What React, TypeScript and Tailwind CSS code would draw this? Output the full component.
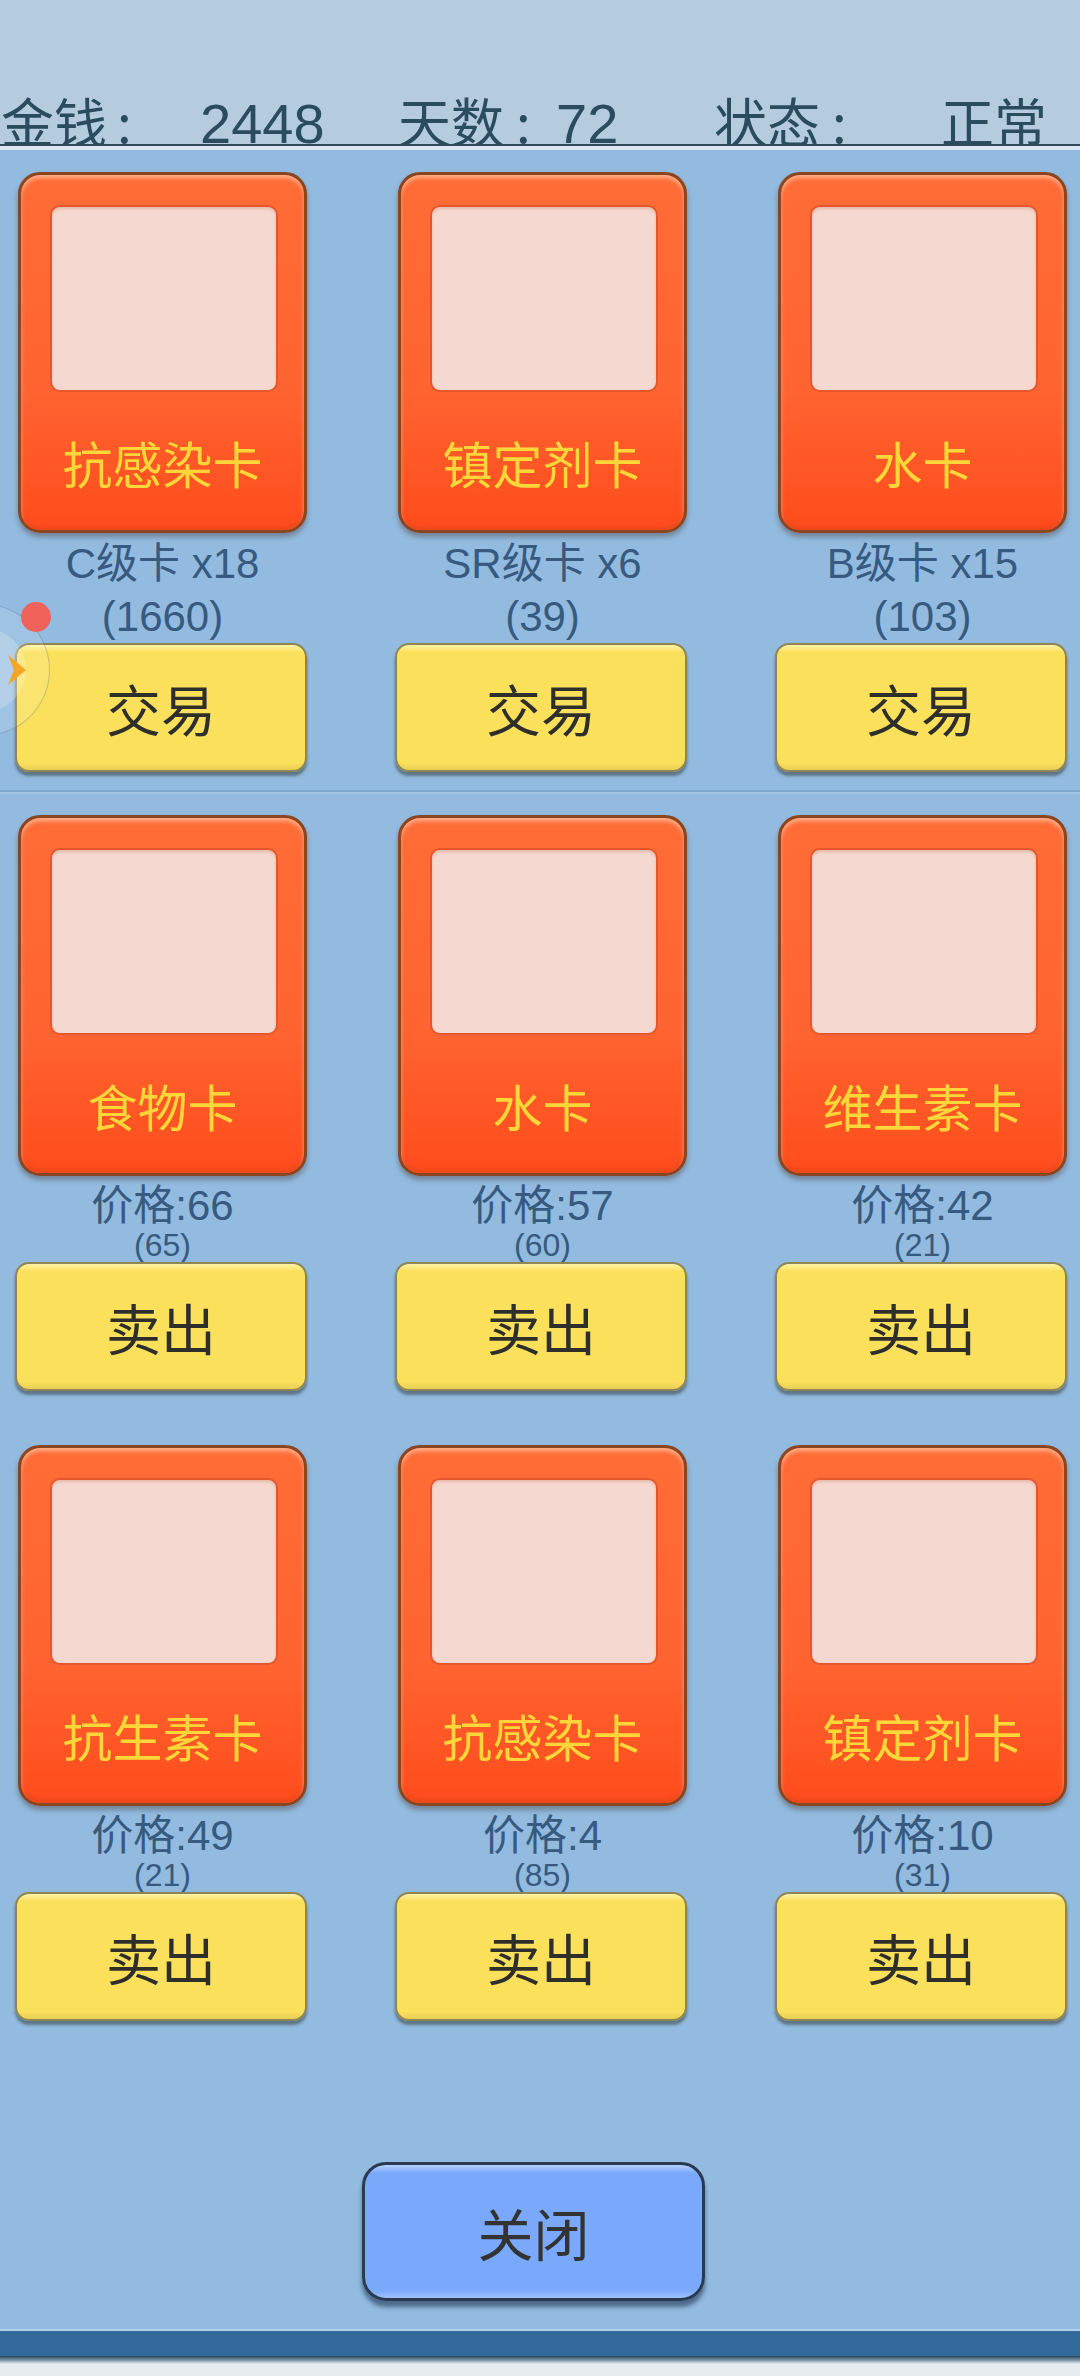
const CN = '"Noto Sans CJK SC", "Noto Sans", sans-serif';
const LS = '"Liberation Sans", "Noto Sans CJK SC", sans-serif';

type TradeCard = { name: string; grade: string; price: number };
type SellCard = { name: string; price: number; base: number };

const TRADE: TradeCard[] = [
  { name: '抗感染卡', grade: 'C级卡 x18', price: 1660 },
  { name: '镇定剂卡', grade: 'SR级卡 x6', price: 39 },
  { name: '水卡', grade: 'B级卡 x15', price: 103 },
];

const SELL_ROWS: SellCard[][] = [
  [
    { name: '食物卡', price: 66, base: 65 },
    { name: '水卡', price: 57, base: 60 },
    { name: '维生素卡', price: 42, base: 21 },
  ],
  [
    { name: '抗生素卡', price: 49, base: 21 },
    { name: '抗感染卡', price: 4, base: 85 },
    { name: '镇定剂卡', price: 10, base: 31 },
  ],
];

function Card({ name }: { name: string }) {
  return (
    <div className="relative h-[361px] w-[289px] rounded-[22px] border-[3px] border-[#8a4620] bg-[linear-gradient(180deg,#ff6c36_0%,#ff6430_60%,#ff4c1c_100%)] shadow-[0_4px_5px_rgba(60,30,20,0.35),inset_0_3px_4px_rgba(255,210,180,0.7),inset_0_-3px_4px_rgba(200,60,20,0.4)]">
      <div className="ml-[29px] mt-[30px] h-[187px] w-[228px] rounded-[10px] border-2 border-[#e4572c] bg-[#f5d9d0] shadow-[inset_0_2px_3px_rgba(200,90,60,0.25)]" />
      <div
        className="mt-[40px] text-center text-[50px] leading-[60px] text-[#fdd63a]"
        style={{ fontFamily: CN }}
      >
        {name}
      </div>
    </div>
  );
}

function YellowButton({ label }: { label: string }) {
  return (
    <div
      className="-ml-[3px] flex h-[129px] w-[292px] items-center justify-center rounded-[14px] border-2 border-[#8e8656] bg-[linear-gradient(180deg,#fff3a4_0%,#fbe05c_6%,#fbe05c_94%,#e8cf55_100%)] text-[55px] text-[#2e2e2a] shadow-[0_4px_3px_rgba(50,60,60,0.55)]"
      style={{ fontFamily: CN }}
    >
      {label}
    </div>
  );
}

function SideWidget() {
  return (
    <div className="pointer-events-none absolute left-0 top-0">
      <div className="absolute left-[-82px] top-[604px] h-[132px] w-[132px] rounded-full border border-[rgba(60,80,100,0.25)] bg-[rgba(255,255,255,0.12)]" />
      <div className="absolute left-[-58px] top-[628px] h-[84px] w-[84px] rounded-full bg-[rgba(255,255,255,0.22)]" />
      <svg className="absolute left-[6px] top-[653px]" width="22" height="34" viewBox="0 0 22 34">
        <path d="M2 2 L20 17 L2 32 L8 17 Z" fill="#f5a524" />
      </svg>
      <div className="absolute left-[21px] top-[602px] h-[30px] w-[30px] rounded-full bg-[#f0625a]" />
    </div>
  );
}

export default function App() {
  return (
    <div className="relative flex h-[2376px] w-[1080px] flex-col overflow-hidden bg-[#e8edf0]">
      {/* Header */}
      <div
        className="flex h-[144px] items-end overflow-hidden bg-[#b5cce0] text-[#2b4b5f]"
        style={{ fontFamily: CN }}
      >
        <div className="flex translate-y-[8px] items-baseline leading-none">
          <span className="ml-[1px] w-[199px] text-[53px]">
            金钱<span className="ml-[10px]">:</span>
          </span>
          <span className="w-[198px] text-[56px]" style={{ fontFamily: '"Liberation Sans", sans-serif' }}>2448</span>
          <span className="w-[158px] text-[53px]">
            天数<span className="ml-[12px]">:</span>
          </span>
          <span className="w-[158px] text-[56px]" style={{ fontFamily: '"Liberation Sans", sans-serif' }}>72</span>
          <span className="w-[227px] text-[53px]">
            状态<span className="ml-[12px]">:</span>
          </span>
          <span className="text-[53px]">正常</span>
        </div>
      </div>
      <div className="h-[2px] bg-[#34495b]" />
      <div className="h-[4px] bg-[#dce9f5]" />

      {/* Panel */}
      <div className="relative flex flex-1 flex-col bg-[#92bbdf]">
        {/* Trade row */}
        <div className="grid grid-cols-[289px_289px_289px] gap-x-[91px] pl-[18px] pt-[22px]">
          {TRADE.map((c) => (
            <div key={c.name + c.grade} className="flex flex-col items-start">
              <Card name={c.name} />
              <div
                className="flex h-[110px] w-[289px] flex-col items-center pt-[4px] text-[42px] leading-[53px] text-[#365a80]"
                style={{ fontFamily: LS }}
              >
                <span>{c.grade}</span>
                <span>({c.price})</span>
              </div>
              <YellowButton label="交易" />
            </div>
          ))}
        </div>

        <div className="mt-[18px] h-[2px] bg-[#7ea7cd]" />
        <div className="h-[2px] bg-[#a4c6e6]" />

        {/* Sell rows */}
        <div className="flex flex-col gap-[54px] pt-[21px]">
          {SELL_ROWS.map((row, i) => (
            <div key={i} className="grid grid-cols-[289px_289px_289px] gap-x-[91px] pl-[18px]">
              {row.map((c) => (
                <div key={c.name + c.price} className="flex flex-col items-start">
                  <Card name={c.name} />
                  <div
                    className="flex h-[86px] w-[289px] flex-col items-center pt-[6px] text-[#365a80]"
                    style={{ fontFamily: LS }}
                  >
                    <span className="text-[42px] leading-[47px]">价格:{c.price}</span>
                    <span className="text-[32px] leading-[33px]">({c.base})</span>
                  </div>
                  <YellowButton label="卖出" />
                </div>
              ))}
            </div>
          ))}
        </div>

        {/* Close */}
        <div className="ml-[362px] mt-[141px]">
          <div
            className="flex h-[139px] w-[343px] items-center justify-center rounded-[24px] border-[3px] border-[#2a3a50] bg-[linear-gradient(180deg,#b7d0ff_0%,#7aa9fc_6%,#7aa9fc_94%,#9fc0ff_100%)] text-[56px] text-[#333333] shadow-[0_6px_4px_rgba(20,40,70,0.55)]"
            style={{ fontFamily: CN }}
          >
            关闭
          </div>
        </div>
        <div className="flex-1" />
        <div className="h-[2px] bg-[#b0d0ea]" />
        <div className="h-[25px] bg-[#336a9c]" />
        <div className="h-[8px] bg-[linear-gradient(180deg,#24415c_0%,#8fa3b4_60%,#e8edf0_100%)]" />
        <div className="h-[12px] bg-[#e8edf0]" />
      </div>

      <SideWidget />
    </div>
  );
}
